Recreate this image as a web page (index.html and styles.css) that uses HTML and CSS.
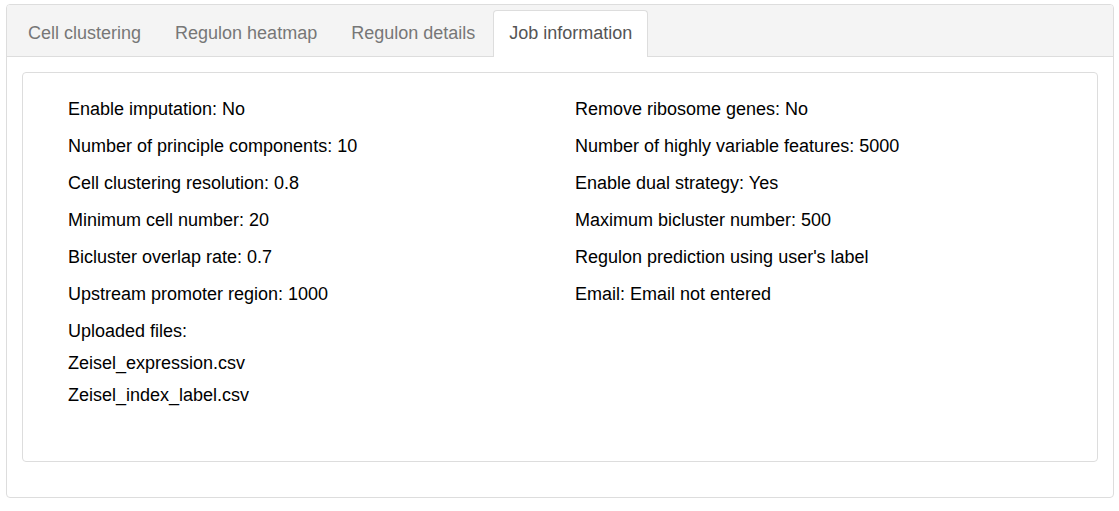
FILE: index.html
```html
<!DOCTYPE html>
<html>
<head>
<meta charset="utf-8">
<link rel="stylesheet" href="styles.css">
</head>
<body>
<div class="tabbox">
  <div class="tabbar">
    <div class="tab">Cell clustering</div>
    <div class="tab">Regulon heatmap</div>
    <div class="tab">Regulon details</div>
    <div class="tab active">Job information</div>
  </div>
  <div class="tabbody">
    <div class="panel">
      <div class="col">
        <p class="item">Enable imputation: No</p>
        <p class="item">Number of principle components: 10</p>
        <p class="item">Cell clustering resolution: 0.8</p>
        <p class="item">Minimum cell number: 20</p>
        <p class="item">Bicluster overlap rate: 0.7</p>
        <p class="item">Upstream promoter region: 1000</p>
        <p class="item">Uploaded files:</p>
        <p class="file">Zeisel_expression.csv</p>
        <p class="file">Zeisel_index_label.csv</p>
      </div>
      <div class="col">
        <p class="item">Remove ribosome genes: No</p>
        <p class="item">Number of highly variable features: 5000</p>
        <p class="item">Enable dual strategy: Yes</p>
        <p class="item">Maximum bicluster number: 500</p>
        <p class="item">Regulon prediction using user's label</p>
        <p class="item">Email: Email not entered</p>
      </div>
    </div>
  </div>
</div>
</body>
</html>
```
FILE: styles.css
```css
html, body {
  margin: 0;
  padding: 0;
  background: #fff;
}
body {
  font-family: "Liberation Sans", Arial, sans-serif;
  font-size: 18px;
  color: #000;
  padding: 4px 5px 0 6px;
}
.tabbox {
  border: 1px solid #ddd;
  border-radius: 4px;
  height: 494px;
  box-sizing: border-box;
  overflow: hidden;
}
.tabbar {
  display: flex;
  gap: 2px;
  background: #f4f4f4;
  border-bottom: 1px solid #ddd;
  padding: 5px 0 0 5px;
  height: 52px;
  box-sizing: border-box;
  align-items: stretch;
}
.tab {
  padding: 0 15px;
  color: #777;
  line-height: 44px;
  border: 1px solid transparent;
  border-bottom: none;
  border-radius: 4px 4px 0 0;
  height: 46px;
  box-sizing: border-box;
}
.tab.active {
  background: #fff;
  color: #555;
  border-color: #ddd;
  height: 47px;
  margin-bottom: -1px;
}
.tabbody {
  padding: 15px 15px 0 15px;
}
.panel {
  border: 1px solid #ddd;
  border-radius: 4px;
  height: 390px;
  box-sizing: border-box;
  padding: 23px 14px 0 45px;
  display: grid;
  grid-template-columns: 507px 507px;
  align-content: start;
}
.col p {
  margin: 0;
  line-height: 26px;
}
.col .item {
  margin-bottom: 11px;
}
.col .file {
  margin-bottom: 6px;
}
.col .item + .file {
  margin-top: -5px;
}
```
